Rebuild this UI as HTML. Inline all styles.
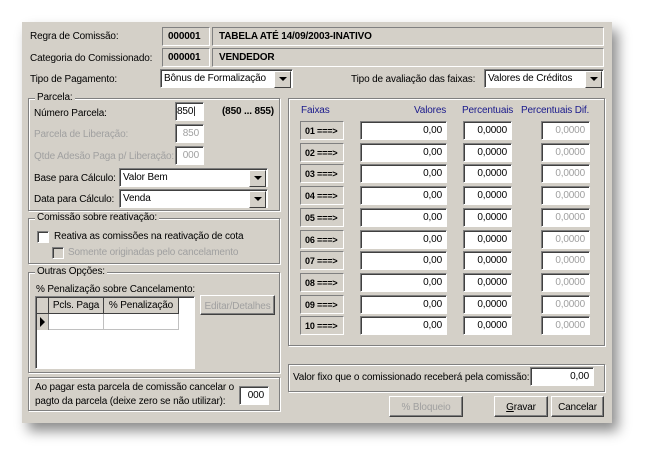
<!DOCTYPE html>
<html><head><meta charset="utf-8"><style>
*{box-sizing:border-box;margin:0;padding:0}
body{width:654px;height:466px;background:#fff;position:relative;overflow:hidden;font-family:"Liberation Sans",sans-serif;font-size:10px;letter-spacing:-0.15px;color:#000}
.win{position:absolute;left:22px;top:22px;width:590px;height:401px;background:#d4d0c8;box-shadow:6px 8px 12px rgba(0,0,0,.45)}
.a{position:absolute;white-space:nowrap}
.bx{position:absolute;border:1px solid;border-color:#808080 #fff #fff #808080;font-weight:bold;padding:3px 6px;font-size:10px}
.in{position:absolute;background:#fff;border:1px solid;border-color:#808080 #fff #fff #808080;box-shadow:inset 1px 1px 0 #404040;text-align:right;padding:3px 4px 0 0;height:19px;white-space:nowrap}
.in.dis2{background:#fff;color:#a0a0a0}
.cb{position:absolute;background:#fff;border:1px solid;border-color:#808080 #fff #fff #808080;box-shadow:inset 1px 1px 0 #404040;height:19px;padding:3px 3px;text-align:left;white-space:nowrap}
.cb:after{content:"";position:absolute;right:1px;top:1px;width:15px;height:15px;background:#d4d0c8;border:1px solid;border-color:#fff #404040 #404040 #fff}
.cb i{position:absolute;right:5px;top:7px;width:0;height:0;border-left:4px solid transparent;border-right:4px solid transparent;border-top:4px solid #000;z-index:2}
.grp{position:absolute;border:1px solid #808080;box-shadow:1px 1px 0 #fff, inset 1px 1px 0 #fff}
.grp span{position:absolute;top:-7px;left:6px;background:#d4d0c8;padding:0 2px}
.fx{position:absolute;border:1px solid;border-color:#808080 #fff #fff #808080;font-weight:bold;font-size:9px;padding:4px 0 0 4px;width:44px;height:19px}
.btn{position:absolute;border:1px solid;border-color:#fff #404040 #404040 #fff;box-shadow:inset -1px -1px 0 #808080;text-align:center;padding-top:5px;white-space:nowrap}
.dis{color:#a0a0a0}
.blue{color:#1a1a8c}
.chk{position:absolute;width:12px;height:12px;background:#fff;border:1px solid;border-color:#808080 #fff #fff #808080;box-shadow:inset 1px 1px 0 #404040}
</style></head><body>
<div class="win"></div>
<div class="a" style="left:30px;top:31px">Regra de Comissão:</div>
<div class="bx" style="left:162px;top:27px;width:48px;height:19px;padding-left:5px">000001</div>
<div class="bx" style="left:212px;top:27px;width:392px;height:19px">TABELA ATÉ 14/09/2003-INATIVO</div>
<div class="a" style="left:30px;top:53px">Categoria do Comissionado:</div>
<div class="bx" style="left:162px;top:48px;width:48px;height:19px;padding-left:5px">000001</div>
<div class="bx" style="left:212px;top:48px;width:392px;height:19px">VENDEDOR</div>
<div class="a" style="left:30px;top:74px">Tipo de Pagamento:</div>
<div class="cb" style="left:160px;top:69px;width:133px">Bônus de Formalização<i></i></div>
<div class="a" style="left:351px;top:74px">Tipo de avaliação das faixas:</div>
<div class="cb" style="left:484px;top:69px;width:120px">Valores de Créditos<i></i></div>

<div class="grp" style="left:28px;top:98px;width:252px;height:113px"><span>Parcela:</span></div>
<div class="a" style="left:34px;top:108px">Número Parcela:</div>
<div class="in" style="left:175px;top:102px;width:29px;text-align:left;padding-left:1px">850|</div>
<div class="a" style="left:222px;top:106px;font-weight:bold">(850 ... 855)</div>
<div class="a dis" style="left:34px;top:129px">Parcela de Liberação:</div>
<div class="in dis2" style="left:175px;top:124px;width:29px">850</div>
<div class="a dis" style="left:34px;top:151px">Qtde Adesão Paga p/ Liberação:</div>
<div class="in dis2" style="left:175px;top:146px;width:29px">000</div>
<div class="a" style="left:34px;top:173px">Base para Cálculo:</div>
<div class="cb" style="left:119px;top:168px;width:149px">Valor Bem<i></i></div>
<div class="a" style="left:34px;top:194px">Data para Cálculo:</div>
<div class="cb" style="left:119px;top:189px;width:149px">Venda<i></i></div>

<div class="grp" style="left:28px;top:218px;width:252px;height:46px"><span>Comissão sobre reativação:</span></div>
<div class="chk" style="left:37px;top:231px"></div>
<div class="a" style="left:54px;top:231px">Reativa as comissões na reativação de cota</div>
<div class="chk" style="left:52px;top:247px;background:#d4d0c8"></div>
<div class="a dis" style="left:68px;top:247px">Somente originadas pelo cancelamento</div>

<div class="grp" style="left:28px;top:272px;width:252px;height:101px"><span>Outras Opções:</span></div>
<div class="a" style="left:36px;top:284px">% Penalização sobre Cancelamento:</div>
<div style="position:absolute;left:35px;top:296px;width:160px;height:73px;background:#fff;border:1px solid;border-color:#808080 #fff #fff #808080;box-shadow:inset 1px 1px 0 #404040"></div>
<div style="position:absolute;left:37px;top:298px;width:12px;height:16px;background:#d4d0c8;border-right:1px solid #404040;border-bottom:1px solid #404040"></div>
<div class="a" style="left:49px;top:298px;width:55px;height:16px;background:#d4d0c8;border-right:1px solid #404040;border-bottom:1px solid #404040;text-align:center;padding-top:2px">Pcls. Paga</div>
<div class="a" style="left:104px;top:298px;width:75px;height:16px;background:#d4d0c8;border-right:1px solid #404040;border-bottom:1px solid #404040;text-align:center;padding-top:2px">% Penalização</div>
<div style="position:absolute;left:37px;top:314px;width:12px;height:16px;background:#d4d0c8;border-right:1px solid #808080"></div>
<div style="position:absolute;left:40px;top:317px;border-top:5px solid transparent;border-bottom:5px solid transparent;border-left:5px solid #000"></div>
<div style="position:absolute;left:49px;top:314px;width:130px;height:16px;border-right:1px solid #c0c0c0;border-bottom:1px solid #c0c0c0"></div>
<div style="position:absolute;left:103px;top:314px;width:1px;height:16px;background:#c0c0c0"></div>
<div class="btn dis" style="left:200px;top:295px;width:75px;height:20px">Editar/Detalhes</div>
<div class="grp" style="left:28px;top:377px;width:252px;height:34px;border-top:1px solid #808080"></div>
<div class="a" style="left:35px;top:382px">Ao pagar esta parcela de comissão cancelar o</div>
<div class="a" style="left:35px;top:396px">pagto da parcela (deixe zero se não utilizar):</div>
<div class="in" style="left:239px;top:386px;width:30px">000</div>

<div class="grp" style="left:288px;top:98px;width:317px;height:248px"></div>
<div class="a blue" style="left:301px;top:105px">Faixas</div>
<div class="a blue" style="left:414px;top:105px">Valores</div>
<div class="a blue" style="left:462px;top:105px">Percentuais</div>
<div class="a blue" style="left:521px;top:105px">Percentuais Dif.</div>
<div id="rows"></div>

<div class="grp" style="left:288px;top:364px;width:317px;height:28px"></div>
<div class="a" style="left:293px;top:372px">Valor fixo que o comissionado receberá pela comissão:</div>
<div class="in" style="left:530px;top:367px;width:64px">0,00</div>
<div class="btn dis" style="left:389px;top:396px;width:74px;height:21px">% Bloqueio</div>
<div class="btn" style="left:494px;top:396px;width:54px;height:21px"><u>G</u>ravar</div>
<div class="btn" style="left:551px;top:396px;width:53px;height:21px">Cancelar</div>
<script>
var h='';for(var i=0;i<10;i++){var y=Math.round(121+i*21.7);var n=(i<9?'0':'')+(i+1);
h+='<div class="fx" style="left:300px;top:'+y+'px">'+n+' ===&gt;</div>'+
'<div class="in" style="left:360px;top:'+y+'px;width:87px">0,00</div>'+
'<div class="in" style="left:463px;top:'+y+'px;width:49px">0,0000</div>'+
'<div class="in dis2" style="left:541px;top:'+y+'px;width:49px">0,0000</div>';}
document.getElementById('rows').outerHTML=h;
</script>
</body></html>
